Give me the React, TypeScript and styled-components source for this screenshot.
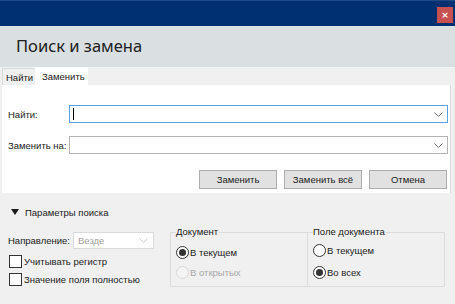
import React from "react";
import styled, { createGlobalStyle } from "styled-components";

const Global = createGlobalStyle`
  html, body { margin: 0; padding: 0; background: #f0f0f0; }
  body { font-family: "Liberation Sans", Arial, sans-serif; font-size: 9.5px; color: #1b1b1b; }
  * { box-sizing: border-box; }
`;

const Window = styled.div`
  width: 455px;
  height: 304px;
  display: flex;
  flex-direction: column;
  background: #f0f0f0;
  overflow: hidden;
  white-space: nowrap;
`;

const TitleBar = styled.div`
  height: 26px;
  flex: none;
  background: #00306f;
  border-top: 1px solid #1a4a88;
  display: flex;
  justify-content: flex-end;
  align-items: flex-start;
  padding: 6px 2px 0 0;
`;

const CloseButton = styled.div`
  width: 16px;
  height: 16px;
  background: #c75050;
  color: #fff;
  font-size: 9px;
  font-weight: bold;
  line-height: 16px;
  text-align: center;
  font-family: "DejaVu Sans", sans-serif;
`;

const Header = styled.div`
  height: 41px;
  flex: none;
  background: #dadfe1;
  display: flex;
  align-items: center;
  padding: 0 0 2px 16px;
`;

const Title = styled.h1`
  margin: 0;
  font-weight: normal;
  font-family: "Noto Sans", sans-serif;
  font-size: 16.5px;
  color: #202020;
`;

const TabStrip = styled.div`
  height: 18px;
  flex: none;
  display: flex;
  align-items: flex-end;
  padding-left: 2px;
`;

const Tab = styled.div<{ $active?: boolean }>`
  height: ${(p) => (p.$active ? 18 : 17)}px;
  width: ${(p) => (p.$active ? 53 : 33)}px;
  padding: 0 ${(p) => (p.$active ? 6 : 3)}px;
  display: flex;
  align-items: center;
  background: ${(p) => (p.$active ? "#ffffff" : "#f0f0f0")};
  border: 1px solid #d9d9d9;
  border-bottom: none;
  ${(p) => (p.$active ? "border-color: #ffffff;" : "border-right: none;")}
`;

const Panel = styled.div`
  margin: 0 4px 0 2px;
  background: #ffffff;
  border-right: 1px solid #dcdcdc;
  padding: 20px 2px 4px 6px;
  display: flex;
  flex-direction: column;
`;

const FieldRow = styled.div<{ $gap: number }>`
  display: grid;
  grid-template-columns: 61px 1fr;
  align-items: center;
  margin-bottom: ${(p) => p.$gap}px;
`;

const Label = styled.span``;

const Combo = styled.div<{ $focused?: boolean }>`
  height: 18px;
  border: 1px solid ${(p) => (p.$focused ? "#5aa2e6" : "#b4b4b4")};
  background: #fff;
  display: flex;
  align-items: center;
  padding: 0 4px 0 3px;
`;

const Caret = styled.span`
  width: 1px;
  height: 12px;
  background: #000;
`;

const Spacer = styled.span`
  flex: 1;
`;

const Chevron = ({ color = "#707070" }: { color?: string }) => (
  <svg width="9" height="5" viewBox="0 0 9 5">
    <path d="M0.5 0.5 L4.5 4.5 L8.5 0.5" fill="none" stroke={color} strokeWidth="1" />
  </svg>
);

const ButtonRow = styled.div`
  display: flex;
  justify-content: flex-end;
  gap: 7px;
  padding-right: 1px;
`;

const Button = styled.button`
  width: 78px;
  height: 19px;
  background: #e1e1e1;
  border: 1px solid #adadad;
  font-family: inherit;
  font-size: 9.5px;
  color: #1b1b1b;
  padding: 0;
`;

const Options = styled.div`
  padding: 12px 8px 0 8px;
  display: flex;
  flex-direction: column;
`;

const Expander = styled.div`
  display: flex;
  align-items: center;
  gap: 6px;
  padding-left: 3px;
  height: 14px;
`;

const Triangle = styled.span`
  width: 0;
  height: 0;
  border-left: 4px solid transparent;
  border-right: 4px solid transparent;
  border-top: 6px solid #1b1b1b;
`;

const OptionsBody = styled.div`
  display: flex;
  margin-top: 13px;
`;

const LeftColumn = styled.div`
  width: 162px;
  display: flex;
  flex-direction: column;
`;

const DirectionRow = styled.div`
  display: flex;
  align-items: center;
  gap: 3px;
  height: 17px;
  margin-bottom: 6px;
`;

const SelectBox = styled.div`
  width: 81px;
  height: 17px;
  border: 1px solid #d9d9d9;
  background: #fff;
  color: #a0a0a0;
  display: flex;
  align-items: center;
  padding: 0 5px 0 4px;
`;

const CheckRow = styled.label`
  display: flex;
  align-items: center;
  gap: 2px;
  height: 13px;
  margin-bottom: 5px;
  margin-left: 1px;
`;

const Box = styled.span`
  width: 13px;
  height: 13px;
  border: 1px solid #333;
  background: #fff;
`;

const Groups = styled.div`
  width: 275px;
  height: 55px;
  border: 1px solid #dcdcdc;
  display: grid;
  grid-template-columns: 137px 1fr;
`;

const Group = styled.div<{ $divider?: boolean }>`
  position: relative;
  ${(p) => (p.$divider ? "border-right: 1px solid #dcdcdc;" : "")}
  padding: ${(p) => (p.$divider ? 13 : 11)}px 0 0 5px;
  display: flex;
  flex-direction: column;
  gap: ${(p) => (p.$divider ? 7 : 9)}px;
`;

const Legend = styled.span`
  position: absolute;
  top: -7px;
  left: 5px;
  background: #f0f0f0;
  padding-right: 1px;
  line-height: 12px;
`;

const RadioRow = styled.div<{ $disabled?: boolean }>`
  display: flex;
  align-items: center;
  gap: 1px;
  height: 13px;
  color: ${(p) => (p.$disabled ? "#a8a8a8" : "#1b1b1b")};
`;

const Radio = styled.span<{ $checked?: boolean; $disabled?: boolean }>`
  width: 13px;
  height: 13px;
  border-radius: 50%;
  border: 1px solid ${(p) => (p.$disabled ? "#d8d8d8" : "#333")};
  background: ${(p) => (p.$disabled ? "#f4f4f4" : "#fff")};
  display: flex;
  align-items: center;
  justify-content: center;
  &::after {
    content: "";
    width: 7px;
    height: 7px;
    border-radius: 50%;
    background: ${(p) => (p.$checked ? "#333" : "transparent")};
  }
`;

export default function App() {
  return (
    <Window>
      <Global />
      <TitleBar>
        <CloseButton>×</CloseButton>
      </TitleBar>
      <Header>
        <Title>Поиск и замена</Title>
      </Header>
      <TabStrip>
        <Tab>Найти</Tab>
        <Tab $active>Заменить</Tab>
      </TabStrip>
      <Panel>
        <FieldRow $gap={13}>
          <Label>Найти:</Label>
          <Combo $focused>
            <Caret />
            <Spacer />
            <Chevron />
          </Combo>
        </FieldRow>
        <FieldRow $gap={16}>
          <Label>Заменить на:</Label>
          <Combo>
            <Spacer />
            <Chevron />
          </Combo>
        </FieldRow>
        <ButtonRow>
          <Button>Заменить</Button>
          <Button>Заменить всё</Button>
          <Button>Отмена</Button>
        </ButtonRow>
      </Panel>
      <Options>
        <Expander>
          <Triangle />
          Параметры поиска
        </Expander>
        <OptionsBody>
          <LeftColumn>
            <DirectionRow>
              <Label>Направление:</Label>
              <SelectBox>
                Везде
                <Spacer />
                <Chevron color="#c8c8c8" />
              </SelectBox>
            </DirectionRow>
            <CheckRow>
              <Box />
              Учитывать регистр
            </CheckRow>
            <CheckRow>
              <Box />
              Значение поля полностью
            </CheckRow>
          </LeftColumn>
          <Groups>
            <Group $divider>
              <Legend>Документ</Legend>
              <RadioRow>
                <Radio $checked />В текущем
              </RadioRow>
              <RadioRow $disabled>
                <Radio $disabled />В открытых
              </RadioRow>
            </Group>
            <Group>
              <Legend>Поле документа</Legend>
              <RadioRow>
                <Radio />В текущем
              </RadioRow>
              <RadioRow>
                <Radio $checked />Во всех
              </RadioRow>
            </Group>
          </Groups>
        </OptionsBody>
      </Options>
    </Window>
  );
}
